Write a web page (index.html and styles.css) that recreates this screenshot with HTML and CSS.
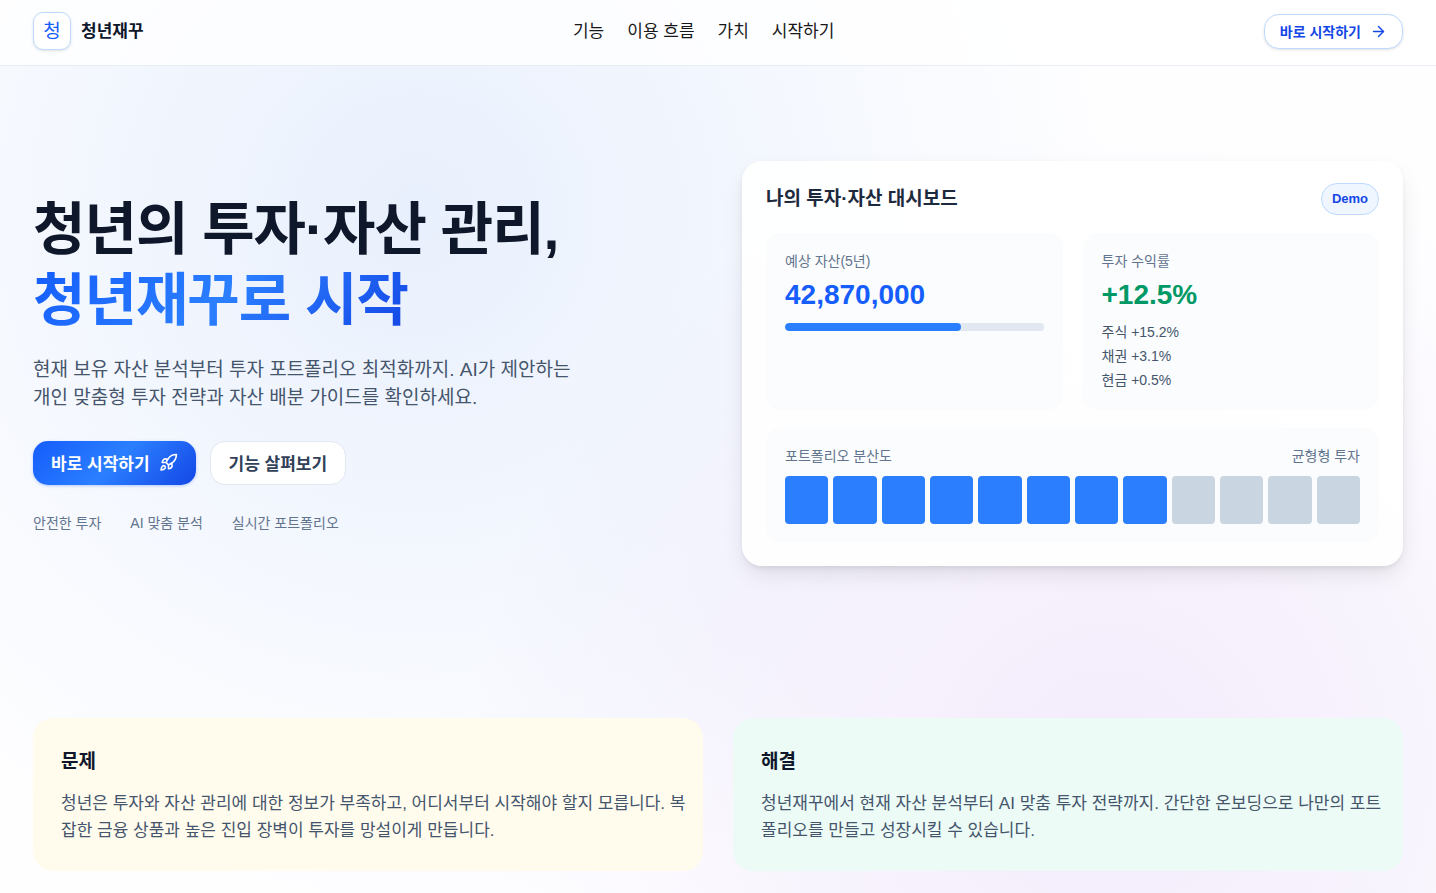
FILE: index.html
```
<!DOCTYPE html>
<html lang="ko">
<head>
  <meta charset="UTF-8">
  <meta name="viewport" content="width=device-width, initial-scale=1.0">
  <title>청년재꾸</title>
  <link rel="stylesheet" href="styles.css">
</head>
<body>

  <header class="header">
    <a href="#" class="brand">
      <span class="logo">청</span>
      <span class="brand-name">청년재꾸</span>
    </a>
    <nav class="nav">
      <a href="#features">기능</a>
      <a href="#flow">이용 흐름</a>
      <a href="#value">가치</a>
      <a href="#start">시작하기</a>
    </nav>
    <button class="header-btn">
      바로 시작하기
      <svg width="17" height="17" viewBox="0 0 24 24" fill="none" stroke="currentColor" stroke-width="2" stroke-linecap="round" stroke-linejoin="round">
        <path d="M5 12h14"/>
        <path d="m12 5 7 7-7 7"/>
      </svg>
    </button>
  </header>

  <main>
    <section class="hero">
      <div class="intro">
        <h1>청년의 투자·자산 관리,<br><span class="accent">청년재꾸로 시작</span></h1>
        <p class="lead">현재 보유 자산 분석부터 투자 포트폴리오 최적화까지. AI가 제안하는 개인 맞춤형 투자 전략과 자산 배분 가이드를 확인하세요.</p>
        <div class="actions">
          <button class="btn primary">
            바로 시작하기
            <svg width="19" height="19" viewBox="0 0 24 24" fill="none" stroke="currentColor" stroke-width="2" stroke-linecap="round" stroke-linejoin="round">
              <path d="M4.5 16.5c-1.5 1.26-2 5-2 5s3.74-.5 5-2c.71-.84.7-2.13-.09-2.91a2.18 2.18 0 0 0-2.91-.09z"/>
              <path d="m12 15-3-3a22 22 0 0 1 2-3.95A12.88 12.88 0 0 1 22 2c0 2.72-.78 7.5-6 11a22.35 22.35 0 0 1-4 2z"/>
              <path d="M9 12H4s.55-3.03 2-4c1.62-1.08 5 0 5 0"/>
              <path d="M12 15v5s3.03-.55 4-2c1.08-1.62 0-5 0-5"/>
            </svg>
          </button>
          <button class="btn secondary">기능 살펴보기</button>
        </div>
        <ul class="points">
          <li>안전한 투자</li>
          <li>AI 맞춤 분석</li>
          <li>실시간 포트폴리오</li>
        </ul>
      </div>

      <div class="dashboard">
        <div class="dashboard-head">
          <h2>나의 투자·자산 대시보드</h2>
          <span class="badge">Demo</span>
        </div>
        <div class="stats">
          <div class="panel">
            <div class="label">예상 자산(5년)</div>
            <div class="value blue">42,870,000</div>
            <div class="progress"><div class="progress-fill" style="width: 68%"></div></div>
          </div>
          <div class="panel">
            <div class="label">투자 수익률</div>
            <div class="value green">+12.5%</div>
            <ul class="returns">
              <li>주식 +15.2%</li>
              <li>채권 +3.1%</li>
              <li>현금 +0.5%</li>
            </ul>
          </div>
        </div>
        <div class="panel">
          <div class="panel-row">
            <span class="label">포트폴리오 분산도</span>
            <span class="label">균형형 투자</span>
          </div>
          <div class="blocks">
            <span class="on"></span>
            <span class="on"></span>
            <span class="on"></span>
            <span class="on"></span>
            <span class="on"></span>
            <span class="on"></span>
            <span class="on"></span>
            <span class="on"></span>
            <span></span>
            <span></span>
            <span></span>
            <span></span>
          </div>
        </div>
      </div>
    </section>

    <section class="value-section" id="value">
      <article class="note problem">
        <h3>문제</h3>
        <p>청년은 투자와 자산 관리에 대한 정보가 부족하고, 어디서부터 시작해야 할지 모릅니다. 복잡한 금융 상품과 높은 진입 장벽이 투자를 망설이게 만듭니다.</p>
      </article>
      <article class="note solution">
        <h3>해결</h3>
        <p>청년재꾸에서 현재 자산 분석부터 AI 맞춤 투자 전략까지. 간단한 온보딩으로 나만의 포트폴리오를 만들고 성장시킬 수 있습니다.</p>
      </article>
    </section>
  </main>

</body>
</html>
```
FILE: styles.css
```
* {
  box-sizing: border-box;
  margin: 0;
  padding: 0;
}

body {
  min-height: 100vh;
  font-family: "Liberation Sans", "Noto Sans CJK KR", sans-serif;
  font-size: 17px;
  color: #0f172b;
  background:
    radial-gradient(circle at 29% 24%, rgba(59, 125, 235, 0.11), rgba(59, 130, 240, 0) 700px),
    radial-gradient(circle at 77% 86%, rgba(150, 80, 225, 0.11), rgba(150, 80, 225, 0) 640px),
    #fefeff;
}

a {
  color: inherit;
  text-decoration: none;
}

ul {
  list-style: none;
}

button {
  font-family: inherit;
  cursor: pointer;
}

.header {
  display: flex;
  justify-content: space-between;
  align-items: center;
  height: 66px;
  padding: 0 33px;
  padding-bottom: 3px;
  background: rgba(255, 255, 255, 0.8);
  border-bottom: 1px solid #e8edf4;
}

.brand {
  display: flex;
  align-items: center;
  gap: 10px;
}

.logo {
  display: flex;
  justify-content: center;
  align-items: center;
  width: 38px;
  height: 38px;
  padding-bottom: 3px;
  border: 1px solid #bedbff;
  border-radius: 10px;
  background: #fff;
  color: #155dfc;
  font-size: 19px;
  box-shadow: 0 1px 3px rgba(0, 0, 0, 0.12);
}

.brand-name {
  padding-bottom: 3px;
  font-weight: 700;
}

.nav {
  display: flex;
  gap: 23px;
  padding-bottom: 3px;
  color: #171717;
}

.header-btn {
  display: flex;
  align-items: center;
  gap: 9px;
  height: 35px;
  padding: 0 15px;
  border: 1px solid #bedbff;
  border-radius: 15px;
  background: #fff;
  color: #1447e6;
  font-size: 14px;
  font-weight: 700;
  box-shadow: 0 1px 3px rgba(0, 0, 0, 0.12);
}

.hero {
  display: grid;
  grid-template-columns: 1fr 1fr;
  gap: 48px;
  align-items: center;
  padding: 95px 33px;
}

h1 {
  font-size: 57px;
  line-height: 71px;
  font-weight: 700;
  letter-spacing: -1px;
}

.accent {
  background: linear-gradient(135deg, #155dfc, #2b7fff 50%, #1447e6);
  -webkit-background-clip: text;
  background-clip: text;
  color: transparent;
}

.lead {
  max-width: 550px;
  margin-top: 20px;
  font-size: 19px;
  line-height: 28px;
  color: #45556c;
}

.actions {
  display: flex;
  gap: 14px;
  margin-top: 29px;
}

.btn {
  display: flex;
  align-items: center;
  gap: 9px;
  height: 44px;
  padding: 0 18px 2px;
  border: none;
  border-radius: 15px;
  font-size: 17px;
  font-weight: 700;
}

.primary {
  background: linear-gradient(135deg, #155dfc, #2b7fff 50%, #1447e6);
  color: #fff;
  box-shadow: 0 1px 3px rgba(21, 93, 252, 0.3);
}

.secondary {
  background: #fff;
  border: 1px solid #e2e8f0;
  color: #314158;
}

.points {
  display: flex;
  gap: 29px;
  margin-top: 28px;
  font-size: 14px;
  line-height: 20px;
  color: #62748e;
}

.dashboard {
  padding: 21px 23px 23px;
  border: 1px solid #fff;
  border-radius: 20px;
  background: rgba(255, 255, 255, 0.9);
  box-shadow: 0 10px 24px -4px rgba(0, 0, 0, 0.11), 0 3px 6px -2px rgba(0, 0, 0, 0.1);
}

.dashboard-head {
  display: flex;
  justify-content: space-between;
  align-items: center;
  margin-bottom: 18px;
}

h2 {
  font-size: 19px;
  line-height: 28px;
  font-weight: 700;
  color: #1d293d;
}

.badge {
  padding: 0 10px;
  border: 1px solid #bedbff;
  border-radius: 16px;
  background: #eff6ff;
  color: #1447e6;
  font-size: 13px;
  line-height: 30px;
  font-weight: 700;
}

.stats {
  display: grid;
  grid-template-columns: 1fr 1fr;
  gap: 20px;
  margin-bottom: 18px;
}

.panel {
  padding: 18px 19px;
  border-radius: 15px;
  background: rgba(248, 250, 252, 0.5);
}

.label {
  font-size: 14px;
  line-height: 20px;
  color: #62748e;
}

.value {
  margin-top: 6px;
  font-size: 28px;
  line-height: 35px;
  font-weight: 700;
}

.blue {
  color: #155dfc;
}

.green {
  color: #009966;
}

.progress {
  height: 8px;
  margin-top: 11px;
  border-radius: 4px;
  background: #e2e8f0;
  overflow: hidden;
}

.progress-fill {
  height: 100%;
  border-radius: 4px;
  background: #2b7fff;
}

.returns {
  margin-top: 8px;
  font-size: 14px;
  line-height: 24px;
  color: #45556c;
}

.panel-row {
  display: flex;
  justify-content: space-between;
}

.blocks {
  display: grid;
  grid-template-columns: repeat(12, 1fr);
  gap: 5px;
  margin-top: 10px;
}

.blocks span {
  height: 48px;
  border-radius: 4px;
  background: #cad5e2;
}

.blocks .on {
  background: #2b7fff;
}

.value-section {
  display: grid;
  grid-template-columns: 1fr 1fr;
  gap: 30px;
  padding: 57px 33px 22px;
}

.note {
  padding: 30px 16px 27px 28px;
  border-radius: 20px;
}

.note h3 {
  font-size: 19px;
  line-height: 28px;
  font-weight: 700;
}

.note p {
  margin-top: 14px;
  line-height: 27px;
  color: #45556c;
}

.problem {
  background: #fffcee;
}

.solution {
  background: #ecfbf6;
}
```
